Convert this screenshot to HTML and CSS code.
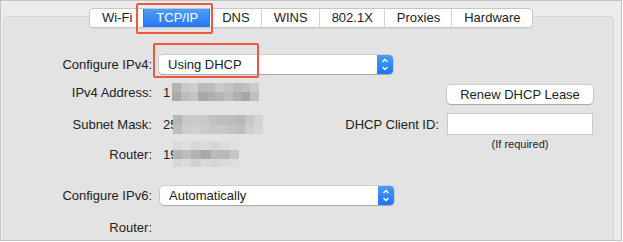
FILE: index.html
```html
<!DOCTYPE html>
<html lang="en">
<head>
    <meta charset="UTF-8">
    <meta name="viewport" content="width=device-width, initial-scale=1.0">
    <title>Network - TCP/IP</title>
    <link rel="stylesheet" href="styles.css">
</head>
<body>
    <div class="window">
        <div class="tabs">
            <span class="tab">Wi-Fi</span>
            <span class="tab tab-active">TCP/IP<span class="mark mark-tab"></span></span>
            <span class="tab">DNS</span>
            <span class="tab">WINS</span>
            <span class="tab">802.1X</span>
            <span class="tab">Proxies</span>
            <span class="tab">Hardware</span>
        </div>

        <div class="panel">
            <div class="row row-config">
                <span class="label">Configure IPv4:</span>
                <div class="popup">
                    <span class="popup-text">Using DHCP</span>
                    <svg class="stepper" width="16" height="19" viewBox="0 0 16 19">
                        <polyline points="5.5,7 8,4.5 10.5,7" />
                        <polyline points="5.5,12 8,14.5 10.5,12" />
                    </svg>
                    <span class="mark mark-popup"></span>
                </div>
            </div>

            <div class="details">
                <div class="info">
                    <div class="info-row">
                        <span class="label">IPv4 Address:</span>
                        <span class="value">1<i class="blur blur-ip"></i></span>
                    </div>
                    <div class="info-row">
                        <span class="label">Subnet Mask:</span>
                        <span class="value">25<i class="blur blur-mask"></i></span>
                    </div>
                    <div class="info-row">
                        <span class="label">Router:</span>
                        <span class="value">19<i class="blur blur-router"></i></span>
                    </div>
                </div>

                <div class="dhcp">
                    <span></span>
                    <button class="btn">Renew DHCP Lease</button>
                    <label class="dhcp-label" for="client-id">DHCP Client ID:</label>
                    <input class="field" id="client-id" type="text">
                    <span></span>
                    <span class="hint">(If required)</span>
                </div>
            </div>

            <div class="row row-v6">
                <span class="label">Configure IPv6:</span>
                <div class="popup">
                    <span class="popup-text">Automatically</span>
                    <svg class="stepper" width="16" height="19" viewBox="0 0 16 19">
                        <polyline points="5.5,7 8,4.5 10.5,7" />
                        <polyline points="5.5,12 8,14.5 10.5,12" />
                    </svg>
                </div>
            </div>

            <div class="row row-router">
                <span class="label">Router:</span>
            </div>
        </div>
    </div>
</body>
</html>
```

FILE: styles.css
```css
body {
    margin: 0;
    background: #ffffff;
    font-family: "Liberation Sans", Arial, sans-serif;
    font-size: 13px;
    color: #222222;
}

.window {
    width: 620px;
    height: 239px;
    border: 1px solid #c4c4c4;
    background: #ececec;
    overflow: hidden;
}

/* segmented tab bar */
.tabs {
    position: relative;
    z-index: 1;
    display: flex;
    width: fit-content;
    margin: 7px 0 0 88px;
    height: 18px;
    border: 1px solid #c6c6c6;
    border-radius: 4px;
    background: #ffffff;
    box-shadow: 0 1px 0 rgba(0,0,0,0.05);
}
.tab {
    position: relative;
    padding: 0 11px 0 12px;
    line-height: 18px;
    border-left: 1px solid #d4d4d4;
    color: #1c1c1c;
}
.tab:first-child {
    border-left: none;
    border-radius: 3px 0 0 3px;
}
.tab:last-child {
    border-radius: 0 3px 3px 0;
}
.tab-active {
    background: linear-gradient(#4f9cfa, #2478f5);
    color: #ffffff;
    border-left-color: #2a78ef;
}
.tab-active + .tab {
    border-left-color: #2a78ef;
}

/* orange annotation boxes */
.mark {
    position: absolute;
    border: 2px solid #e95a3e;
    border-radius: 2px;
    pointer-events: none;
}
.mark-tab {
    left: -8px;
    right: -4px;
    top: -6px;
    bottom: -7px;
}
.mark-popup {
    left: -6px;
    top: -12px;
    width: 102px;
    height: 31px;
}

.panel {
    margin: -12px 7px 0 2px;
    height: 260px;
    background: #e3e3e3;
    border: 1px solid #d5d5d5;
    border-radius: 5px;
}

.row {
    display: flex;
    align-items: center;
}
.label {
    flex: none;
    width: 148px;
    text-align: right;
}
.row-config {
    margin-top: 38px;
    height: 19px;
}

.popup {
    position: relative;
    display: flex;
    align-items: center;
    margin-left: 7px;
    width: 234px;
    height: 19px;
    background: #ffffff;
    border-radius: 4px;
    box-shadow: 0 0 0 0.5px rgba(0,0,0,0.18), 0 1px 1px rgba(0,0,0,0.18);
}
.popup-text {
    padding-left: 9px;
}
.stepper {
    margin-left: auto;
    background: linear-gradient(#4a9bfa, #1f74f4);
    border-radius: 0 4px 4px 0;
}
.stepper polyline {
    fill: none;
    stroke: #ffffff;
    stroke-width: 1.4;
}

.details {
    display: flex;
    margin-top: 2px;
}
.info {
    display: grid;
    grid-template-rows: 32px 32px 28px;
}
.info-row {
    display: flex;
    align-items: center;
}
.value {
    display: flex;
    align-items: center;
    margin-left: 11px;
}

/* pixelated address blocks */
.blur {
    display: block;
    background-repeat: no-repeat;
}
.blur-ip {
    margin-left: 2px;
    width: 87px;
    height: 18px;
    background-image:
        linear-gradient(to right, #b3b3b3 0 10%, #c8c8c8 10% 20%, #cdcdcd 20% 30%, #b9b9b9 30% 40%, #bdbdbd 40% 50%, #c9c9c9 50% 60%, #c4c4c4 60% 70%, #bababa 70% 80%, #bfbfbf 80% 90%, #cbcbcb 90% 100%),
        linear-gradient(to right, #a9a9a9 0 10%, #bcbcbc 10% 20%, #c4c4c4 20% 30%, #a7a7a7 30% 40%, #adadad 40% 50%, #b5b5b5 50% 60%, #bdbdbd 60% 70%, #b0b0b0 70% 80%, #a6a6a6 80% 90%, #c0c0c0 90% 100%);
    background-size: 100% 9px;
    background-position: 0 0, 0 9px;
}
.blur-mask {
    margin-left: -4px;
    width: 90px;
    height: 19px;
    background-image:
        linear-gradient(to right, #b6b6b6 0 10%, #c7c7c7 10% 20%, #cbcbcb 20% 30%, #c8c8c8 30% 40%, #c1c1c1 40% 50%, #bdbdbd 50% 60%, #bcbcbc 60% 70%, #b9b9b9 70% 80%, #c8c8c8 80% 90%, #d3d3d3 90% 100%),
        linear-gradient(to right, #bdbdbd 0 10%, #cdcdcd 10% 20%, #d0d0d0 20% 30%, #cbcbcb 30% 40%, #c6c6c6 40% 50%, #c9c9c9 50% 60%, #c4c4c4 60% 70%, #c0c0c0 70% 80%, #cfcfcf 80% 90%, #d6d6d6 90% 100%);
    background-size: 100% 10px;
    background-position: 0 0, 0 10px;
}
.blur-router {
    margin-left: -4px;
    width: 66px;
    height: 26px;
    background-image:
        linear-gradient(to right, #dadada 0 14%, #dfdfdf 14% 28%, #d8d8d8 28% 43%, #dcdcdc 43% 57%, #d6d6d6 57% 71%, #dddddd 71% 86%, #e0e0e0 86% 100%),
        linear-gradient(to right, #b4b4b4 0 14%, #bdbdbd 14% 28%, #b2b2b2 28% 43%, #a9a9a9 43% 57%, #bababa 57% 71%, #b7b7b7 71% 86%, #c6c6c6 86% 100%),
        linear-gradient(to right, #d6d6d6 0 14%, #dbdbdb 14% 28%, #d2d2d2 28% 43%, #d9d9d9 43% 57%, #d4d4d4 57% 71%, #dadada 71% 86%, #dedede 86% 100%);
    background-size: 100% 9px;
    background-position: 0 0, 0 9px, 0 18px;
}

/* DHCP controls on the right */
.dhcp {
    display: grid;
    grid-template-columns: auto 146px;
    column-gap: 8px;
    row-gap: 9px;
    align-content: start;
    align-items: center;
    margin-left: auto;
    margin-right: 20px;
    padding-top: 9px;
}
.dhcp-label {
    text-align: right;
}
.btn {
    height: 19px;
    padding: 0;
    border: none;
    border-radius: 4px;
    background: #ffffff;
    box-shadow: 0 0 0 0.5px rgba(0,0,0,0.18), 0 1px 1px rgba(0,0,0,0.18);
    font-family: inherit;
    font-size: 13px;
    color: #222222;
}
.field {
    box-sizing: border-box;
    width: 146px;
    height: 22px;
    margin: 0;
    border: 1px solid #c9c9c9;
    background: #ffffff;
}
.hint {
    margin-top: -6px;
    font-size: 11px;
    line-height: 12px;
    text-align: center;
}

.row-v6 {
    margin-top: 18px;
    height: 19px;
}
.row-v6 .popup {
    margin-left: 8px;
}
.row-router {
    margin-top: 7px;
    height: 30px;
}
```
